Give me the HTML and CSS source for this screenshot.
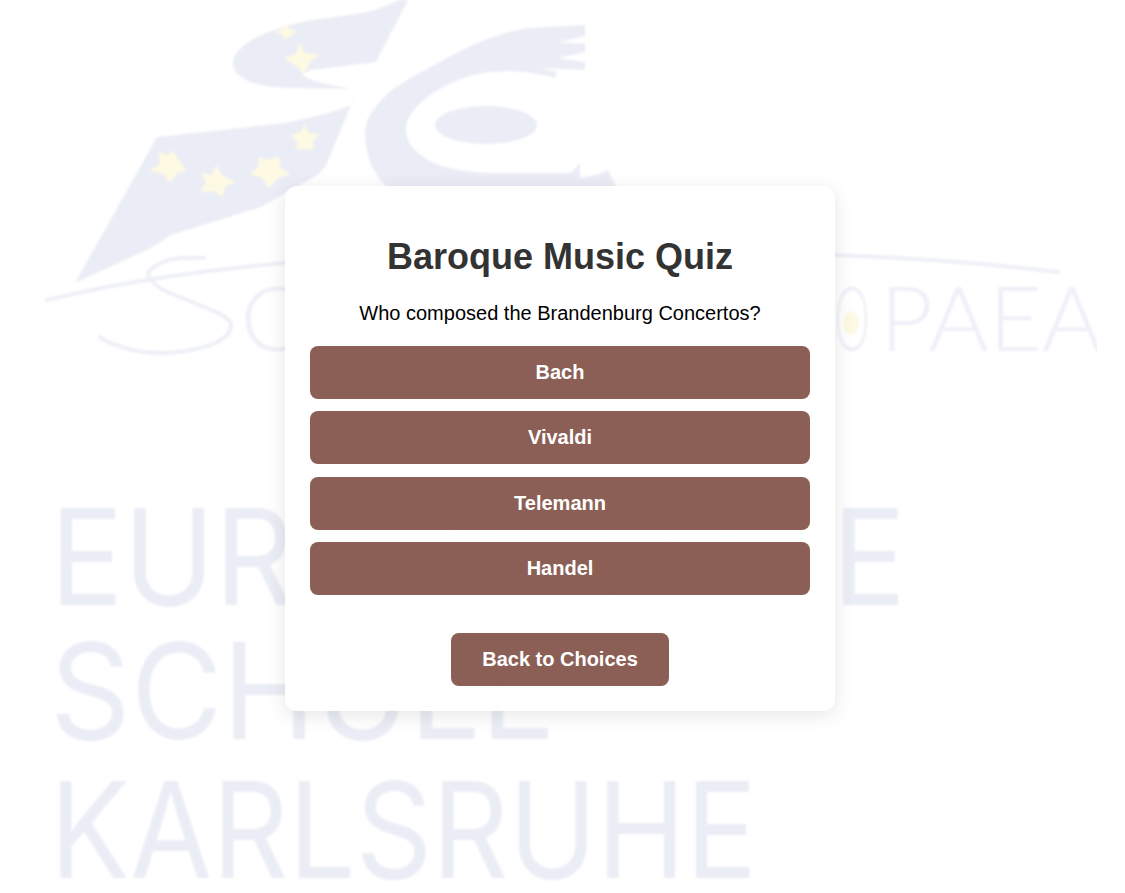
FILE: index.html
```html
<!DOCTYPE html>
<html lang="en">
<head>
<meta charset="utf-8">
<title>Baroque Music Quiz</title>
<link rel="stylesheet" href="styles.css">
</head>
<body>
<svg class="backdrop" viewBox="0 0 1097 893" aria-hidden="true">
  <defs><filter id="soft"><feGaussianBlur stdDeviation="0.9"/></filter></defs>
  <g filter="url(#soft)">
    <path class="ink" d="M408 0L398 0C385 7 375 10 367 12C340 17 315 19 298 23C265 31 233 45 233 63C233 76 250 85 275 87C300 89 330 88 351 89C340 86 315 84 302 75L310 70L376 62Z"/>
    <path class="ink" d="M351 105C352 104 354 100 355 95L327 163C323 170 319 174 314 177L261 207L171 235L151 248L75 283L157 137L286 123C310 118 335 112 351 105Z"/>
    <path class="ink" d="M585 25L530 28C500 32 470 45 449 57C420 73 400 83 388 93C372 110 365 120 365 133C365 150 370 165 376 173C385 190 420 222 480 226C540 228 600 224 620 212C622 200 620 192 616 186L608 170L596 175L580 178L580 163L571 173L490 173C460 172 435 166 424 157C412 150 406 140 406 130C406 115 420 102 433 93C450 82 470 74 490 72C515 70 535 72 555 78L557 72L540 68L585 70L585 62L558 58L585 52L585 44L558 42L585 36Z"/>
    <ellipse class="ink" cx="486" cy="125" rx="51" ry="19"/>
    <g class="star">
      <path d="M286 24L290 29L297 31L291 36L285 40L281 34L275 32L282 29Z"/>
      <path d="M299 43L304 52L319 55L309 63L304 75L298 67L284 58L296 54Z"/>
      <path d="M173 151L178 159L187 171L177 173L170 183L164 175L150 170L160 164L158 152L167 155Z"/>
      <path d="M216 165L222 175L236 182L226 186L222 197L214 191L200 192L206 182L201 173L212 175Z"/>
      <path d="M259 157L268 160L279 156L280 167L290 174L279 178L268 188L262 178L250 174L258 167Z"/>
      <path d="M304 124L309 133L319 134L313 142L314 150L304 149L296 150L297 142L291 135L301 132Z"/>
    </g>
    <ellipse class="star" cx="851" cy="323" rx="8" ry="12"/>
    <path class="line" d="M47 300C90 290 120 284 147 280C190 273 240 267 286 263C400 255 700 250 835 255C920 258 1000 265 1058 272"/>
    <path class="line" d="M204 258C185 257 172 258 163 262C150 268 146 273 149 277C153 284 160 288 163 290L204 307C222 314 231 319 231 325C231 336 218 343 204 347C190 351 175 353 163 353C148 353 134 351 122 347C112 344 104 341 100 337"/>
    <text class="motto" x="240" y="351" textLength="530" lengthAdjust="spacingAndGlyphs">CHOLA EUR</text>
    <text class="motto" x="834" y="351" textLength="36" lengthAdjust="spacingAndGlyphs">O</text>
    <text class="motto" x="880" y="351" textLength="222" lengthAdjust="spacingAndGlyphs">PAEA</text>
    <text class="school" x="50" y="605" textLength="856" lengthAdjust="spacingAndGlyphs">EUROPÄISCHE</text>
    <text class="school" x="50" y="739" textLength="506" lengthAdjust="spacingAndGlyphs">SCHULE</text>
    <text class="school" x="50" y="878" textLength="707" lengthAdjust="spacingAndGlyphs">KARLSRUHE</text>
  </g>
</svg>
<main class="card">
  <h1 class="title">Baroque Music Quiz</h1>
  <p class="question">Who composed the Brandenburg Concertos?</p>
  <div class="options">
    <button class="btn option">Bach</button>
    <button class="btn option">Vivaldi</button>
    <button class="btn option">Telemann</button>
    <button class="btn option">Handel</button>
  </div>
  <button class="btn back">Back to Choices</button>
</main>
</body>
</html>
```

FILE: styles.css
```css
* { box-sizing: border-box; }
html, body { margin: 0; height: 100%; }
body {
  background: #fff;
  font-family: "Liberation Sans", Arial, sans-serif;
  display: flex;
  justify-content: center;
  align-items: flex-start;
  padding: 186px 5px 0 0;
  overflow: hidden;
}
.backdrop {
  position: absolute;
  left: 0;
  top: 0;
  width: 1097px;
  height: 893px;
}
.ink { fill: #ebedf6; }
.star, .star path { fill: #fdf9e3; }
.line { fill: none; stroke: #eef0f7; stroke-width: 4; stroke-linecap: round; }
.motto { font-family: Lato, sans-serif; font-weight: 300; font-size: 90px; fill: #eff0f8; }
.school { font-family: Inter, sans-serif; font-weight: 400; font-size: 133px; fill: #ebedf6; }
.card {
  position: relative;
  width: 550px;
  height: 525px;
  padding: 25px;
  background: rgba(255, 255, 255, 0.95);
  border-radius: 12px;
  box-shadow: 0 4px 20px rgba(0, 0, 0, 0.1);
  text-align: center;
}
.title {
  margin: 25px 0 0;
  color: #333;
  font-size: 36px;
  line-height: 41px;
  font-weight: 700;
}
.question {
  margin: 25px 0 0;
  color: #000;
  font-size: 20px;
  line-height: 23px;
}
.options {
  display: flex;
  flex-direction: column;
  gap: 12.33px;
  margin-top: 21px;
}
.btn {
  display: block;
  height: 53px;
  padding: 0;
  border: 0;
  border-radius: 8px;
  background: #8c5f56;
  color: #fff;
  font-family: inherit;
  font-size: 20px;
  font-weight: 700;
  white-space: nowrap;
}
.option { width: 100%; }
.back { margin: 38px auto 0; width: 218px; }
```
